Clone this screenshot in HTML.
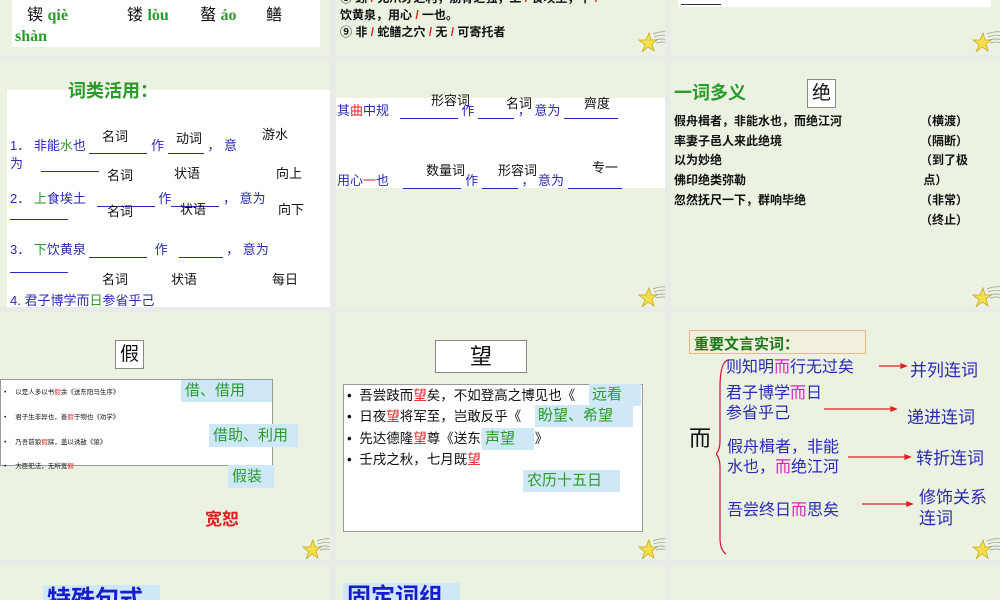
<!DOCTYPE html>
<html><head><meta charset="utf-8"><style>
*{margin:0;padding:0;box-sizing:border-box}
body{width:1000px;height:600px;overflow:hidden;background:#e9ebe8;position:relative;font-family:"Liberation Sans","Noto Sans CJK SC",sans-serif}
.s{position:absolute;background:#ebf2e2;overflow:hidden}
.a{position:absolute;white-space:nowrap}
.w{position:absolute;background:#fff}
.b{color:#2a2ab4}.g{color:#2a9a2a}.r{color:#e02020}.k{color:#111}
.hl{position:absolute;background:#cfe8f8;color:#2a9a2a;white-space:nowrap}
.u{display:inline-block;border-bottom:1px solid #2a2ab4;height:14px;vertical-align:bottom}
.bold{font-weight:bold}
.star{position:absolute;width:34px;height:26px}
</style></head><body>
<svg width="0" height="0" style="position:absolute"><defs>
<g id="st"><path d="M8 24 L11 17 L5 12 L12 12 L15 5 L17 12 L23 12 L18 16 L20 23 L14 19 Z" fill="#f4e04a" stroke="#c9a820" stroke-width="0.8"/><path d="M19 6 Q26 3 34 4 M20 9 Q27 6 34 8 M21 12 Q28 10 34 12 M22 15 Q28 13 34 15" stroke="#999" stroke-width="0.7" fill="none"/></g>
</defs></svg>

<!-- row0 -->
<div class="s" style="left:0;top:0;width:330px;height:55px">
 <div class="w" style="left:12px;top:0;width:308px;height:47px"></div>
 <div class="a" style="left:27px;top:6px;font-size:16px;line-height:20px"><span class="k">锲</span> <span class="g" style="font-family:'Liberation Serif';font-weight:bold">qiè</span></div>
 <div class="a" style="left:127px;top:6px;font-size:16px;line-height:20px"><span class="k">镂</span> <span class="g" style="font-family:'Liberation Serif';font-weight:bold">lòu</span></div>
 <div class="a" style="left:200px;top:6px;font-size:16px;line-height:20px"><span class="k">螯</span> <span class="g" style="font-family:'Liberation Serif';font-weight:bold">áo</span></div>
 <div class="a k" style="left:266px;top:6px;font-size:16px;line-height:20px">鳝</div>
 <div class="a g" style="left:15px;top:27px;font-size:16px;line-height:20px;font-family:'Liberation Serif';font-weight:bold">shàn</div>
</div>
<div class="s" style="left:336px;top:0;width:329px;height:55px">
 <div class="a bold k" style="left:4px;top:-10px;font-size:12px;line-height:17px">⑧ 蚓 <span class="r">/</span> 无爪牙之利，筋骨之强，上 <span class="r">/</span> 食埃土，下 <span class="r">/</span></div>
 <div class="a bold k" style="left:4px;top:7px;font-size:12px;line-height:17px">饮黄泉，用心 <span class="r">/</span> 一也。</div>
 <div class="a bold k" style="left:4px;top:24px;font-size:12px;line-height:17px">⑨ 非 <span class="r">/</span> 蛇鳝之穴 <span class="r">/</span> 无 <span class="r">/</span> 可寄托者</div>
 <svg class="star" style="left:298px;top:28px"><use href="#st"/></svg>
</div>
<div class="s" style="left:670px;top:0;width:330px;height:55px">
 <div class="w" style="left:8px;top:0;width:313px;height:7px"></div>
 <div style="position:absolute;left:11px;top:4px;width:40px;border-top:1px solid #333"></div>
 <svg class="star" style="left:298px;top:28px"><use href="#st"/></svg>
</div>

<!-- row1 col0 -->
<div class="s" style="left:0;top:61px;width:330px;height:246px">
 <div class="w" style="left:7px;top:29px;width:323px;height:217px"></div>
 <div class="a g bold" style="left:68px;top:16px;font-size:18px">词类活用：</div>
 <div class="a k" style="left:102px;top:65px;font-size:13px">名词</div>
 <div class="a k" style="left:176px;top:67px;font-size:13px">动词</div>
 <div class="a k" style="left:262px;top:63px;font-size:13px">游水</div>
 <div class="a b" style="left:10px;top:74px;font-size:13px">1． 非能<span class="g">水</span>也 <span class="u" style="width:58px"></span> 作 <span class="u" style="width:36px"></span> ， 意</div>
 <div class="a b" style="left:10px;top:92px;font-size:13px">为 &nbsp;&nbsp;&nbsp;&nbsp;<span class="u" style="width:58px"></span></div>
 <div class="a k" style="left:107px;top:104px;font-size:13px">名词</div>
 <div class="a k" style="left:174px;top:102px;font-size:13px">状语</div>
 <div class="a k" style="left:276px;top:102px;font-size:13px">向上</div>
 <div class="a b" style="left:10px;top:127px;font-size:13px">2． <span class="g">上</span>食埃土 &nbsp;&nbsp;<span class="u" style="width:58px"></span> 作<span class="u" style="width:48px"></span> ， 意为</div>
 <div style="position:absolute;left:10px;top:158px;width:58px;border-top:1px solid #2a2ab4"></div>
 <div class="a k" style="left:107px;top:140px;font-size:13px">名词</div>
 <div class="a k" style="left:180px;top:138px;font-size:13px">状语</div>
 <div class="a k" style="left:278px;top:138px;font-size:13px">向下</div>
 <div class="a b" style="left:10px;top:178px;font-size:13px">3． <span class="g">下</span>饮黄泉 <span class="u" style="width:58px"></span> &nbsp;作 &nbsp;&nbsp;<span class="u" style="width:44px"></span> ， 意为</div>
 <div style="position:absolute;left:10px;top:211px;width:58px;border-top:1px solid #2a2ab4"></div>
 <div class="a k" style="left:102px;top:208px;font-size:13px">名词</div>
 <div class="a k" style="left:171px;top:208px;font-size:13px">状语</div>
 <div class="a k" style="left:272px;top:208px;font-size:13px">每日</div>
 <div class="a b" style="left:10px;top:229px;font-size:13px">4. 君子博学而<span class="g">日</span>参省乎己</div>
</div>

<!-- row1 col1 -->
<div class="s" style="left:336px;top:61px;width:329px;height:246px">
 <div class="w" style="left:0;top:37px;width:329px;height:90px"></div>
 <div class="a k" style="left:95px;top:29px;font-size:13px">形容词</div>
 <div class="a k" style="left:170px;top:32px;font-size:13px">名词</div>
 <div class="a k" style="left:248px;top:32px;font-size:13px">齊度</div>
 <div class="a b" style="left:1px;top:39px;font-size:13px">其<span class="r">曲</span>中规 &nbsp;&nbsp;<span class="u" style="width:58px"></span> 作 <span class="u" style="width:36px"></span> ， 意为 <span class="u" style="width:54px"></span></div>
 <div class="a k" style="left:90px;top:99px;font-size:13px">数量词</div>
 <div class="a k" style="left:162px;top:99px;font-size:13px">形容词</div>
 <div class="a k" style="left:256px;top:96px;font-size:13px">专一</div>
 <div class="a b" style="left:1px;top:109px;font-size:13px">用心<span class="r">一</span>也 &nbsp;&nbsp;&nbsp;<span class="u" style="width:58px"></span> 作 <span class="u" style="width:36px"></span> ， 意为 <span class="u" style="width:54px"></span></div>
 <svg class="star" style="left:298px;top:222px"><use href="#st"/></svg>
</div>

<!-- row1 col2 -->
<div class="s" style="left:670px;top:61px;width:330px;height:246px">
 <div class="a g bold" style="left:4px;top:18px;font-size:18px">一词多义</div>
 <div class="a k" style="left:137px;top:18px;width:29px;height:29px;border:1px solid #888;background:#fff;font-size:19px;text-align:center;line-height:27px">绝</div>
 <div class="a k bold" style="left:4px;top:51px;font-size:12px;line-height:19.7px">假舟楫者，非能水也，而绝江河<br>率妻子邑人来此绝境<br>以为妙绝<br>佛印绝类弥勒<br>忽然抚尺一下，群响毕绝</div>
 <div class="a k bold" style="left:250px;top:51px;font-size:12px;line-height:19.7px">（横渡）<br>（隔断）<br>（到了极<br>&nbsp;点）<br>（非常）<br>（终止）</div>
 <svg class="star" style="left:298px;top:222px"><use href="#st"/></svg>
</div>

<!-- row2 col0 -->
<div class="s" style="left:0;top:313px;width:330px;height:247px">
 <div class="a k" style="left:115px;top:27px;width:29px;height:29px;border:1px solid #888;background:#fff;font-size:19px;text-align:center;line-height:27px">假</div>
 <div class="w" style="left:0;top:66px;width:273px;height:87px;border:1px solid #999"></div>
 <div class="a k" style="left:4px;top:68px;font-size:6.5px;line-height:24.8px">•&nbsp;&nbsp;&nbsp;&nbsp;&nbsp;以是人多以书<span class="r">假</span>余《送东阳马生序》<br>•&nbsp;&nbsp;&nbsp;&nbsp;&nbsp;君子生非异也，善<span class="r">假</span>于物也《劝学》<br>•&nbsp;&nbsp;&nbsp;&nbsp;&nbsp;乃吾前狼<span class="r">假</span>寐，盖以诱敌《狼》<br>•&nbsp;&nbsp;&nbsp;&nbsp;&nbsp;大臣犯法，无所宽<span class="r">假</span></div>
 <div class="hl" style="left:181px;top:67px;width:91px;height:22px;font-size:15px;padding-left:4px;line-height:22px">借、借用</div>
 <div class="hl" style="left:209px;top:111px;width:89px;height:23px;font-size:15px;padding-left:4px;line-height:23px">借助、利用</div>
 <div class="hl" style="left:228px;top:152px;width:46px;height:23px;font-size:15px;padding-left:4px;line-height:23px">假装</div>
 <div class="a r bold" style="left:205px;top:192px;font-size:17px">宽恕</div>
 <svg class="star" style="left:298px;top:222px"><use href="#st"/></svg>
</div>

<!-- row2 col1 -->
<div class="s" style="left:336px;top:313px;width:329px;height:247px">
 <div class="a k" style="left:99px;top:27px;width:92px;height:33px;border:1px solid #888;background:#fff;font-size:22px;text-align:center;line-height:31px">望</div>
 <div class="w" style="left:7px;top:71px;width:300px;height:148px;border:1px solid #999"></div>
 <div class="a k" style="left:11px;top:72px;font-size:13.5px;line-height:21.3px">•&nbsp; 吾尝跂而<span class="r">望</span>矣，不如登高之博见也《<br>•&nbsp; 日夜<span class="r">望</span>将军至，岂敢反乎《<br>•&nbsp; 先达德隆<span class="r">望</span>尊《送东阳马生序》<br>•&nbsp; 壬戌之秋，七月既<span class="r">望</span></div>
 <div class="hl" style="left:253px;top:71px;width:52px;height:22px;font-size:15px;padding-left:3px;line-height:22px">远看</div>
 <div class="hl" style="left:199px;top:92px;width:98px;height:22px;font-size:15px;padding-left:3px;line-height:22px">盼望、希望</div>
 <div class="hl" style="left:146px;top:115px;width:52px;height:22px;font-size:15px;padding-left:3px;line-height:22px">声望</div>
 <div class="hl" style="left:187px;top:157px;width:97px;height:22px;font-size:15px;padding-left:4px;line-height:22px">农历十五日</div>
 <svg class="star" style="left:298px;top:222px"><use href="#st"/></svg>
</div>

<!-- row2 col2 -->
<div class="s" style="left:670px;top:313px;width:330px;height:247px">
 <div class="a" style="left:19px;top:17px;width:177px;height:24px;border:1px solid #e8b888;background:#f0f0dc"></div>
 <div class="a bold" style="left:24px;top:20px;font-size:15px;color:#1a7a1a">重要文言实词：</div>
 <div class="a k" style="left:19px;top:108px;font-size:22px">而</div>
 <svg style="position:absolute;left:46px;top:45px" width="14" height="200"><path d="M12 2 Q4 4 4 30 L4 82 Q4 92 0 96 Q4 100 4 110 L4 180 Q4 192 10 196" stroke="#d02040" stroke-width="1.3" fill="none"/></svg>
 <div class="a b" style="left:56px;top:40px;font-size:16px">则知明<span style="color:#e020c0">而</span>行无过矣</div>
 <div class="a b" style="left:56px;top:71px;font-size:16px;line-height:20px">君子博学<span style="color:#e020c0">而</span>日<br>参省乎己</div>
 <div class="a b" style="left:57px;top:125px;font-size:16px;line-height:20px">假舟楫者，非能<br>水也，<span style="color:#e020c0">而</span>绝江河</div>
 <div class="a b" style="left:57px;top:183px;font-size:16px">吾尝终日<span style="color:#e020c0">而</span>思矣</div>
 <svg style="position:absolute;left:0;top:0" width="330" height="247"><g stroke="#e02020" stroke-width="1.3" fill="#e02020"><line x1="209" y1="53" x2="233" y2="53"/><path d="M236 53 L231 51 L231 55Z"/><line x1="154" y1="96" x2="224" y2="96"/><path d="M226 96 L221 94 L221 98Z"/><line x1="178" y1="144" x2="238" y2="144"/><path d="M240 144 L235 142 L235 146Z"/><line x1="192" y1="191" x2="240" y2="191"/><path d="M242 191 L237 189 L237 193Z"/></g></svg>
 <div class="a b" style="left:240px;top:43px;font-size:17px">并列连词</div>
 <div class="a b" style="left:237px;top:90px;font-size:17px">递进连词</div>
 <div class="a b" style="left:246px;top:131px;font-size:17px">转折连词</div>
 <div class="a b" style="left:249px;top:174px;font-size:17px;line-height:21px">修饰关系<br>连词</div>
 <svg class="star" style="left:298px;top:222px"><use href="#st"/></svg>
</div>

<!-- row3 -->
<div class="s" style="left:0;top:566px;width:330px;height:34px">
 <div class="a bold" style="left:43px;top:19px;width:117px;height:30px;background:#cfe8f8;color:#1a1ad0;font-size:24px;padding-left:4px;line-height:30px">特殊句式</div>
</div>
<div class="s" style="left:336px;top:566px;width:329px;height:34px">
 <div class="a bold" style="left:7px;top:17px;width:117px;height:30px;background:#cfe8f8;color:#1a1ad0;font-size:24px;padding-left:4px;line-height:30px">固定词组</div>
</div>
<div class="s" style="left:670px;top:566px;width:330px;height:34px"></div>
</body></html>
